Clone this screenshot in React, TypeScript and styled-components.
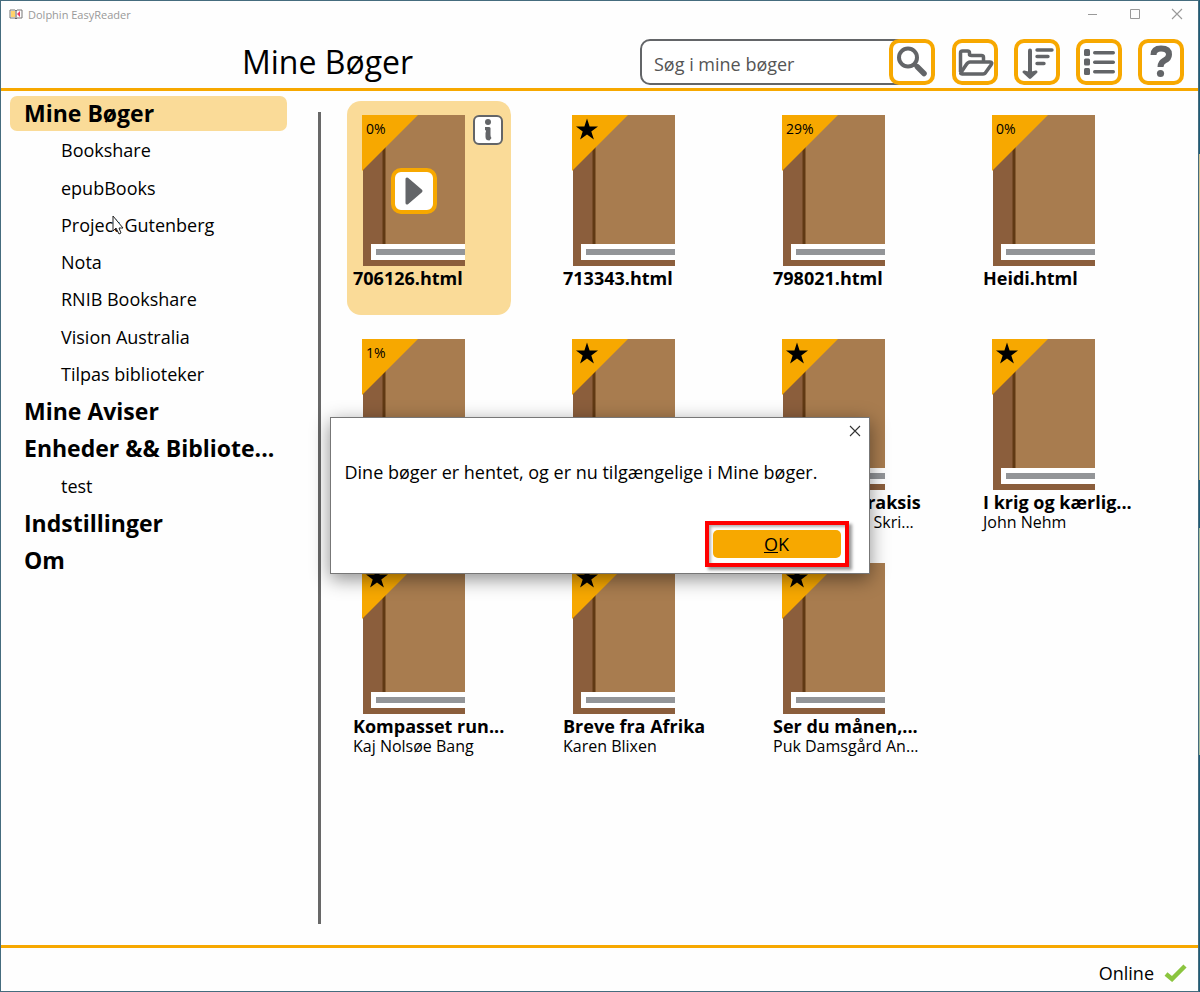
import React from "react";
import styled, { createGlobalStyle, css } from "styled-components";

const amber = "#f7a800";
const sand = "#fadb98";
const slate = "#636568";

const GlobalStyle = createGlobalStyle`
  * { box-sizing: border-box; }
  body { margin: 0; background: #fff; color: #000; font-family: "Open Sans", "Noto Sans", sans-serif; font-size: 18px; }
  button, input { font: inherit; color: inherit; }
  button { padding: 0; cursor: pointer; }
  h1, h2, p, ul { margin: 0; padding: 0; }
  ul { list-style: none; }
`;

/* Windows lying behind the reader show as coloured bands along its right edge. */
const Desktop = styled.div`
  padding-right: 1px;
  background: linear-gradient(
    #1f5d78 0 154px,
    #d3c490 154px 480px,
    #1f5d78 480px 528px,
    #a5bf9f 528px 755px,
    #1f5d78 755px
  );
`;

const Window = styled.div`
  position: relative;
  display: flex;
  flex-direction: column;
  min-height: 100vh;
  border: 1px solid #456c7e;
  background: #fefefe;
`;

const TitleBar = styled.div`
  display: flex;
  align-items: center;
  height: 26px;
  padding: 0 15px 0 8px;
  color: #999;
  font-size: 11px;
`;

const AppName = styled.span`
  flex: 1;
  margin-left: 5px;
`;

const WindowControls = styled.div`
  display: flex;
  gap: 30px;
`;

const PlainButton = styled.button`
  display: grid;
  place-items: center;
  width: 12px;
  height: 12px;
  border: 0;
  background: none;
`;

const Header = styled.header`
  display: flex;
  align-items: center;
  height: 64px;
  padding: 8px 14px 0 241px;
  border-bottom: 3px solid ${amber};
`;

const Heading = styled.h1`
  flex: 1;
  font-size: 32px;
  font-weight: 400;
  line-height: 40px;
`;

const Search = styled.form`
  display: flex;
  width: 295px;
`;

const SearchInput = styled.input`
  flex: 1;
  min-width: 0;
  height: 46px;
  margin-right: -12px;
  padding: 5px 16px 0 12px;
  border: 2px solid ${slate};
  border-radius: 10px 0 0 10px;
  background: #fff;
  outline: 0;
  &::placeholder { color: #555; opacity: 1; }
`;

const ToolButton = styled.button`
  position: relative;
  display: grid;
  place-items: center;
  width: 46px;
  height: 46px;
  border: 4px solid ${amber};
  border-radius: 10px;
  background: #fff;
  color: ${slate};
`;

const Tools = styled.div`
  display: flex;
  gap: 16px;
  margin-left: 17px;
`;

const Body = styled.div`
  display: flex;
  flex: 1;
`;

const Sidebar = styled.nav`
  display: flex;
  flex: none;
  flex-direction: column;
  align-self: flex-start;
  justify-content: space-between;
  width: 317px;
  height: 487px;
  padding: 5px 31px 0 9px;
`;

const NavLink = styled.a<{ $level: 1 | 2; $active?: boolean }>`
  display: block;
  height: 35px;
  overflow: hidden;
  border-radius: 7px;
  color: inherit;
  line-height: 34px;
  text-decoration: none;
  white-space: nowrap;
  ${(p) => p.$level === 1
    ? css`padding-left: 14px; font-size: 23px; font-weight: 700;`
    : css`padding-left: 51px; font-size: 18px;`}
  ${(p) => p.$active && css`background: ${sand};`}
`;

const Divider = styled.div`
  width: 3px;
  margin: 21px 0 21px;
  background: #686868;
`;

const Shelf = styled.main`
  flex: 1;
  min-width: 0;
  padding: 10px 0 0 26px;
`;

const BookGrid = styled.ul`
  display: grid;
  grid-template-columns: repeat(auto-fill, 164px);
  grid-auto-rows: 214px;
  gap: 10px 46px;
`;

const Tile = styled.li<{ $selected?: boolean }>`
  padding: 14px 0 0 6px;
  border-radius: 14px;
  background: ${(p) => (p.$selected ? sand : "transparent")};
`;

const CoverRow = styled.div`
  display: flex;
  gap: 8px;
  padding-left: 9px;
`;

const Cover = styled.div`
  position: relative;
  width: 103px;
  height: 151px;
`;

const Progress = styled.span`
  position: absolute;
  top: 5px;
  left: 4px;
  font-size: 14px;
  line-height: 18px;
`;

const PlayButton = styled(ToolButton)`
  position: absolute;
  top: 53px;
  left: 29px;
`;

const InfoButton = styled.button`
  display: grid;
  place-items: center;
  width: 30px;
  height: 30px;
  border: 2px solid ${slate};
  border-radius: 6px;
  background: #fff;
  color: ${slate};
`;

const BookTitle = styled.h2`
  font-size: 18px;
  font-weight: 700;
  line-height: 24px;
  white-space: nowrap;
`;

const Author = styled.p`
  font-size: 16px;
  line-height: 16px;
  white-space: nowrap;
`;

const StatusBar = styled.footer`
  display: flex;
  align-items: center;
  justify-content: flex-end;
  gap: 10px;
  height: 46px;
  padding: 7px 11px 0 0;
  border-top: 3px solid ${amber};
`;

const Overlay = styled.div`
  position: absolute;
  inset: 0;
  display: grid;
  place-items: center;
  padding-bottom: 2px;
`;

const Dialog = styled.div`
  display: flex;
  flex-direction: column;
  width: 540px;
  height: 157px;
  padding: 7px 8px 6px 14px;
  border: 1px solid #777;
  background: #fff;
  box-shadow: 0 5px 18px rgba(0, 0, 0, 0.45);
`;

const DialogClose = styled(PlainButton)`
  align-self: flex-end;
`;

const Message = styled.p`
  flex: 1;
  padding-top: 22px;
  line-height: 26px;
  white-space: nowrap;
`;

const Highlight = styled.div`
  align-self: flex-end;
  width: 144px;
  margin-right: 12px;
  padding: 5px 4px;
  border: 4px solid #f00;
  box-shadow: 3px 3px 3px rgba(0, 0, 0, 0.4), inset 2px 2px 3px rgba(0, 0, 0, 0.3);
`;

const OkButton = styled.button`
  display: block;
  width: 100%;
  height: 28px;
  border: 0;
  border-radius: 5px;
  background: ${amber};
`;

const Pointer = styled.svg`
  position: absolute;
  top: 214px;
  left: 110px;
`;

const Logo = () => (
  <svg width="14" height="11" viewBox="0 0 14 11">
    <path d="M1 1h5l1 1 1-1h5v8H8l-1 1-1-1H1z" fill="#fff" stroke="#777" />
    <path d="M2 2h4v6H2z" fill="#ffd36b" />
    <path d="M8 5l3-3v6z" fill="#f0395f" />
    <path d="M7 2v8" stroke="#555" />
  </svg>
);

const Cross = ({ color }: { color: string }) => (
  <svg width="12" height="12" viewBox="0 0 12 12" stroke={color} strokeWidth="1.1">
    <path d="M1 1l10 10M11 1L1 11" />
  </svg>
);

const SearchIcon = () => (
  <svg width="36" height="36" viewBox="0 0 36 36" fill="none" stroke="currentColor">
    <circle cx="14" cy="13.500" r="9" strokeWidth="4" />
    <path d="M20 19.500l3 3" strokeWidth="4" />
    <path d="M23.500 23l6.500 6.500" strokeWidth="5.500" strokeLinecap="round" />
  </svg>
);

const FolderIcon = () => (
  <svg width="37" height="34" viewBox="0 0 37 34" fill="none" stroke="currentColor" strokeWidth="3.500" strokeLinejoin="round">
    <path d="M3.500 27V8q0-2 2-2h5q2 0 2 2v1.500q0 1 2 1h10q2 0 2 2V17" />
    <path d="M4 27.500l5-7.500q2-3 4-3h20q3 0 1 3l-5 7q-1 2-3 2H5q-2 0-1-1.500z" />
  </svg>
);

const SortIcon = () => (
  <svg width="36" height="36" viewBox="0 0 36 36" stroke="currentColor" strokeLinecap="round">
    <path d="M11 6.500v22" strokeWidth="4" fill="none" />
    <path d="M5 28q6 2 12 0l-6 5.500z" strokeWidth="3" strokeLinejoin="round" fill="currentColor" />
    <path d="M18 6h15M18 12.500h11M18 19.500h7" strokeWidth="3.400" />
  </svg>
);

const ListIcon = () => (
  <svg width="34" height="34" viewBox="0 0 34 34" fill="currentColor">
    {[4, 13.5, 23].map((y) => (
      <g key={y}>
        <rect x="2" y={y} width="6" height="7" rx="1.5" />
        <rect x="11" y={y + 2} width="22" height="3.4" rx="1.7" />
      </g>
    ))}
  </svg>
);

const HelpIcon = () => (
  <svg width="36" height="36" viewBox="0 0 36 36" fill="none" stroke="currentColor">
    <path d="M10.500 11q0-6.500 7.500-6.500 8 0 8 6 0 4-4.500 6-4 2-4 6.500" strokeWidth="6" />
    <circle cx="17.500" cy="29.500" r="3.600" fill="currentColor" stroke="none" />
  </svg>
);

const PlayIcon = () => (
  <svg width="36" height="36" viewBox="0 0 36 36" fill="currentColor" stroke="currentColor" strokeWidth="3" strokeLinejoin="round">
    <path d="M11 6v24l14-12z" />
  </svg>
);

const InfoIcon = () => (
  <svg width="14" height="24" viewBox="0 0 14 24" fill="currentColor">
    <circle cx="7" cy="4" r="3" />
    <path d="M4 9h4q2 0 1.500 3v5q0 2 1 3l-2 2.500q-4 0-4-3.500v-4q1-2 0-3H4z" />
  </svg>
);

const Tick = () => (
  <svg width="23" height="18" viewBox="0 0 23 18">
    <path d="M2 10l6 5L21 2" fill="none" stroke="#8bc53f" strokeWidth="4.500" />
  </svg>
);

const CoverArt = ({ star }: { star: boolean }) => (
  <svg width="103" height="151" viewBox="0 0 103 151">
    <path d="M1 0h102v151H1z" fill="#8b5e3c" />
    <path d="M23 0h80v130H23z" fill="#a87c4f" />
    <path d="M20.500 0h3v130h-3z" fill="#603913" />
    <path d="M9 129h94v16H9z" fill="#fff" />
    <path d="M14 134h89v6H14z" fill="#939598" />
    <path d="M0 0h56L0 56z" fill={amber} />
    {star && <path d="M15 3.500l2.600 8H26l-6.700 5 2.600 8L15 19.500l-6.900 5 2.600-8-6.700-5h8.400z" />}
  </svg>
);

type Book = { title: string; author?: string; progress?: string; selected?: boolean };

const books: Book[] = [
  { title: "706126.html", progress: "0%", selected: true },
  { title: "713343.html" },
  { title: "798021.html", progress: "29%" },
  { title: "Heidi.html", progress: "0%" },
  { title: "", progress: "1%" },
  { title: "" },
  { title: "Ledelse i praksis", author: "Hanne Marie Skri..." },
  { title: "I krig og kærlig...", author: "John Nehm" },
  { title: "Kompasset run...", author: "Kaj Nolsøe Bang" },
  { title: "Breve fra Afrika", author: "Karen Blixen" },
  { title: "Ser du månen,...", author: "Puk Damsgård An..." },
];

type NavItem = { label: string; level: 1 | 2; active?: boolean };

const navigation: NavItem[] = [
  { label: "Mine Bøger", level: 1, active: true },
  { label: "Bookshare", level: 2 },
  { label: "epubBooks", level: 2 },
  { label: "Project Gutenberg", level: 2 },
  { label: "Nota", level: 2 },
  { label: "RNIB Bookshare", level: 2 },
  { label: "Vision Australia", level: 2 },
  { label: "Tilpas biblioteker", level: 2 },
  { label: "Mine Aviser", level: 1 },
  { label: "Enheder && Bibliote...", level: 1 },
  { label: "test", level: 2 },
  { label: "Indstillinger", level: 1 },
  { label: "Om", level: 1 },
];

const BookTile = ({ book }: { book: Book }) => (
  <Tile $selected={book.selected}>
    <CoverRow>
      <Cover>
        <CoverArt star={!book.progress} />
        {book.progress && <Progress>{book.progress}</Progress>}
        {book.selected && <PlayButton aria-label="Afspil"><PlayIcon /></PlayButton>}
      </Cover>
      {book.selected && <InfoButton aria-label="Info"><InfoIcon /></InfoButton>}
    </CoverRow>
    {book.title && <BookTitle>{book.title}</BookTitle>}
    {book.author && <Author>{book.author}</Author>}
  </Tile>
);

export default function App() {
  return (
    <Desktop>
      <GlobalStyle />
      <Window>
        <TitleBar>
          <Logo />
          <AppName>Dolphin EasyReader</AppName>
          <WindowControls>
            <PlainButton aria-label="Minimer">
              <svg width="12" height="12" stroke="#999"><path d="M1 6.500h9" /></svg>
            </PlainButton>
            <PlainButton aria-label="Maksimer">
              <svg width="12" height="12" stroke="#999" fill="none"><path d="M1.500 1.500h9v9h-9z" /></svg>
            </PlainButton>
            <PlainButton aria-label="Luk"><Cross color="#999" /></PlainButton>
          </WindowControls>
        </TitleBar>
        <Header>
          <Heading>Mine Bøger</Heading>
          <Search onSubmit={(e) => e.preventDefault()}>
            <SearchInput aria-label="Søg i mine bøger" placeholder="Søg i mine bøger" />
            <ToolButton aria-label="Søg"><SearchIcon /></ToolButton>
          </Search>
          <Tools>
            <ToolButton aria-label="Åbn"><FolderIcon /></ToolButton>
            <ToolButton aria-label="Sorter"><SortIcon /></ToolButton>
            <ToolButton aria-label="Liste"><ListIcon /></ToolButton>
            <ToolButton aria-label="Hjælp"><HelpIcon /></ToolButton>
          </Tools>
        </Header>
        <Body>
          <Sidebar>
            {navigation.map((n) => (
              <NavLink key={n.label} href="#" $level={n.level} $active={n.active}>{n.label}</NavLink>
            ))}
          </Sidebar>
          <Divider />
          <Shelf>
            <BookGrid>
              {books.map((b, i) => <BookTile key={i} book={b} />)}
            </BookGrid>
          </Shelf>
        </Body>
        <StatusBar>
          Online
          <Tick />
        </StatusBar>
        <Pointer width="14" height="20" viewBox="0 0 14 20">
          <path d="M2 1v15l3-3 3 6 2-1-2-5h4z" fill="#fff" stroke="#222" strokeWidth="1" />
        </Pointer>
        <Overlay>
          <Dialog role="dialog" aria-label="Besked">
            <DialogClose aria-label="Luk besked"><Cross color="#333" /></DialogClose>
            <Message>Dine bøger er hentet, og er nu tilgængelige i Mine bøger.</Message>
            <Highlight><OkButton><u>O</u>K</OkButton></Highlight>
          </Dialog>
        </Overlay>
      </Window>
    </Desktop>
  );
}
